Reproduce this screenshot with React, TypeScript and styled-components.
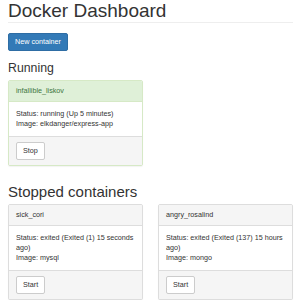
import React from "react";
import styled, { createGlobalStyle } from "styled-components";

const Global = createGlobalStyle`
  html, body { margin: 0; padding: 0; background: #fff; }
  body {
    font-family: "Liberation Sans", Arial, Helvetica, sans-serif;
    font-size: 7.2px;
    line-height: 10px;
    color: #333;
  }
  * { box-sizing: border-box; }
`;

const Container = styled.div`
  width: 300px;
  padding: 0 7px 0 8px;
`;

const Title = styled.h1`
  margin: 0;
  font-size: 19px;
  line-height: 21px;
  font-weight: 400;
  padding-bottom: 1px;
  border-bottom: 1px solid #eee;
  color: #333;
`;

const Btn = styled.button<{ $primary?: boolean }>`
  display: inline-block;
  font-family: inherit;
  font-size: 7.2px;
  line-height: 10px;
  padding: 3px 6px;
  border-radius: 2px;
  border: 1px solid ${(p) => (p.$primary ? "#2e6da4" : "#ccc")};
  background: ${(p) => (p.$primary ? "#337ab7" : "#fff")};
  color: ${(p) => (p.$primary ? "#fff" : "#333")};
  cursor: pointer;
`;

const Toolbar = styled.div`
  margin-top: 10px;
  display: flex;
`;

const SectionTitle = styled.h2<{ $size: number; $lh: number; $mt: number; $mb: number }>`
  font-weight: 400;
  color: #333;
  margin: ${(p) => p.$mt}px 0 ${(p) => p.$mb}px;
  font-size: ${(p) => p.$size}px;
  line-height: ${(p) => p.$lh}px;
`;

const Grid = styled.div`
  display: grid;
  grid-template-columns: 1fr 1fr;
  column-gap: 15px;
  align-items: start;
`;

const Panel = styled.div<{ $success?: boolean }>`
  border: 1px solid ${(p) => (p.$success ? "#d6e9c6" : "#ddd")};
  border-radius: 2px;
  background: #fff;
  box-shadow: 0 1px 1px rgba(0, 0, 0, 0.05);
  margin-bottom: 10px;
  overflow: hidden;
`;

const PanelHeading = styled.div<{ $success?: boolean }>`
  padding: 5px 7px;
  background: ${(p) => (p.$success ? "#dff0d8" : "#f5f5f5")};
  color: ${(p) => (p.$success ? "#3c763d" : "#333")};
  border-bottom: 1px solid ${(p) => (p.$success ? "#d6e9c6" : "#ddd")};
`;

const PanelBody = styled.div`
  padding: 7px 7px;
  display: flex;
  flex-direction: column;
`;

const InfoLine = styled.div`
  line-height: 10px;
`;

const PanelFooter = styled.div`
  padding: 5px 7px;
  background: #f5f5f5;
  border-top: 1px solid #ddd;
`;

type C = { name: string; status: string; image: string };

const running: C[] = [
  { name: "infallible_liskov", status: "running (Up 5 minutes)", image: "elkdanger/express-app" },
];

const stopped: C[] = [
  { name: "sick_cori", status: "exited (Exited (1) 15 seconds ago)", image: "mysql" },
  { name: "angry_rosalind", status: "exited (Exited (137) 15 hours ago)", image: "mongo" },
];

function Card({ c, success, action }: { c: C; success?: boolean; action: string }) {
  return (
    <Panel $success={success}>
      <PanelHeading $success={success}>{c.name}</PanelHeading>
      <PanelBody>
        <InfoLine>{`Status: ${c.status}`}</InfoLine>
        <InfoLine>{`Image: ${c.image}`}</InfoLine>
      </PanelBody>
      <PanelFooter>
        <Btn>{action}</Btn>
      </PanelFooter>
    </Panel>
  );
}

export default function App() {
  return (
    <>
      <Global />
      <Container>
        <Title>Docker Dashboard</Title>
        <Toolbar>
          <Btn $primary>New container</Btn>
        </Toolbar>
        <SectionTitle $size={12.3} $lh={14} $mt={10} $mb={5}>
          Running
        </SectionTitle>
        <Grid>
          {running.map((c) => (
            <Card key={c.name} c={c} success action="Stop" />
          ))}
        </Grid>
        <SectionTitle $size={15} $lh={16} $mt={8} $mb={4}>
          Stopped containers
        </SectionTitle>
        <Grid>
          {stopped.map((c) => (
            <Card key={c.name} c={c} action="Start" />
          ))}
        </Grid>
      </Container>
    </>
  );
}
